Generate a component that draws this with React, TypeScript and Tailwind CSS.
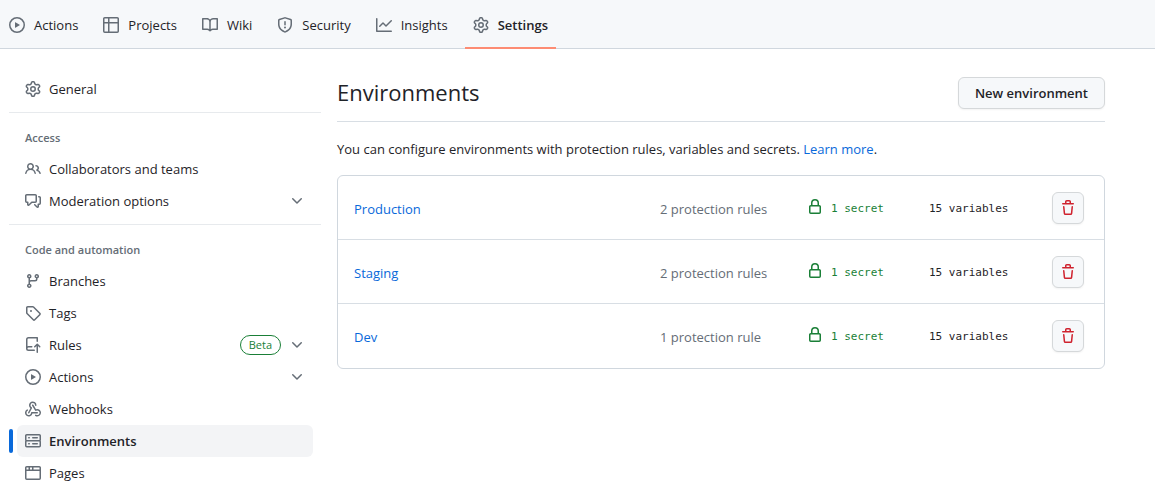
import type { ReactNode } from "react";

const icons = {
  play: "M8 0a8 8 0 1 1 0 16A8 8 0 0 1 8 0ZM1.5 8a6.5 6.5 0 1 0 13 0 6.5 6.5 0 0 0-13 0Zm4.879-2.773 4.264 2.559a.25.25 0 0 1 0 .428l-4.264 2.559A.25.25 0 0 1 6 10.559V5.442a.25.25 0 0 1 .379-.215Z",
  table:
    "M0 1.75C0 .784.784 0 1.75 0h12.5C15.216 0 16 .784 16 1.75v12.5A1.75 1.75 0 0 1 14.25 16H1.75A1.75 1.75 0 0 1 0 14.25ZM6.5 6.5v8h7.75a.25.25 0 0 0 .25-.25V6.5Zm8-1.5V1.75a.25.25 0 0 0-.25-.25H6.5V5Zm-13 1.5v7.75c0 .138.112.25.25.25H5v-8ZM5 5V1.5H1.75a.25.25 0 0 0-.25.25V5Z",
  book: "M0 1.75A.75.75 0 0 1 .75 1h4.253c1.227 0 2.317.59 3 1.501A3.743 3.743 0 0 1 11.006 1h4.245a.75.75 0 0 1 .75.75v10.5a.75.75 0 0 1-.75.75h-4.507a2.25 2.25 0 0 0-1.591.659l-.622.621a.75.75 0 0 1-1.06 0l-.622-.621A2.25 2.25 0 0 0 5.258 13H.75a.75.75 0 0 1-.75-.75Zm7.251 10.324.004-5.073-.002-2.253A2.25 2.25 0 0 0 5.003 2.5H1.5v9h3.757a3.75 3.75 0 0 1 1.994.574ZM8.755 4.75l-.004 7.322a3.752 3.752 0 0 1 1.992-.572H14.5v-9h-3.495a2.25 2.25 0 0 0-2.25 2.25Z",
  shield:
    "M7.467.133a1.748 1.748 0 0 1 1.066 0l5.25 1.68A1.75 1.75 0 0 1 15 3.48V7c0 1.566-.32 3.182-1.303 4.682-.983 1.498-2.585 2.813-5.032 3.855a1.697 1.697 0 0 1-1.33 0c-2.447-1.042-4.049-2.357-5.032-3.855C1.32 10.182 1 8.566 1 7V3.48a1.75 1.75 0 0 1 1.217-1.667Zm.61 1.429a.25.25 0 0 0-.153 0l-5.25 1.68a.25.25 0 0 0-.174.238V7c0 1.358.275 2.666 1.057 3.86.784 1.194 2.121 2.34 4.366 3.297a.196.196 0 0 0 .154 0c2.245-.956 3.582-2.104 4.366-3.298C13.225 9.666 13.5 8.36 13.5 7V3.48a.251.251 0 0 0-.174-.237l-5.25-1.68ZM8.75 4.75v3a.75.75 0 0 1-1.5 0v-3a.75.75 0 0 1 1.5 0ZM9 10.5a1 1 0 1 1-2 0 1 1 0 0 1 2 0Z",
  graph:
    "M1.5 1.75V13.5h13.75a.75.75 0 0 1 0 1.5H.75a.75.75 0 0 1-.75-.75V1.75a.75.75 0 0 1 1.5 0Zm14.28 2.53-5.25 5.25a.75.75 0 0 1-1.06 0L7 7.06 4.28 9.78a.751.751 0 0 1-1.042-.018.751.751 0 0 1-.018-1.042l3.25-3.25a.75.75 0 0 1 1.06 0L10 7.94l4.72-4.72a.751.751 0 0 1 1.042.018.751.751 0 0 1 .018 1.042Z",
  gear: "M8 0a8.2 8.2 0 0 1 .701.031C9.444.095 9.99.645 10.16 1.29l.288 1.107c.018.066.079.158.212.224.231.114.454.243.668.386.123.082.233.09.299.071l1.103-.303c.644-.176 1.392.021 1.82.63.27.385.506.792.704 1.218.315.675.111 1.422-.364 1.891l-.814.806c-.049.048-.098.147-.088.294.016.257.016.515 0 .772-.01.147.038.246.088.294l.814.806c.475.469.679 1.216.364 1.891a7.977 7.977 0 0 1-.704 1.217c-.428.61-1.176.807-1.82.63l-1.102-.302c-.067-.019-.177-.011-.3.071a5.909 5.909 0 0 1-.668.386c-.133.066-.194.158-.211.224l-.29 1.106c-.168.646-.715 1.196-1.458 1.26a8.006 8.006 0 0 1-1.402 0c-.743-.064-1.289-.614-1.458-1.26l-.289-1.106c-.018-.066-.079-.158-.212-.224a5.738 5.738 0 0 1-.668-.386c-.123-.082-.233-.09-.299-.071l-1.103.303c-.644.176-1.392-.021-1.82-.63a8.12 8.12 0 0 1-.704-1.218c-.315-.675-.111-1.422.363-1.891l.815-.806c.05-.048.098-.147.088-.294a6.214 6.214 0 0 1 0-.772c.01-.147-.038-.246-.088-.294l-.815-.806C.635 6.045.431 5.298.746 4.623a7.92 7.92 0 0 1 .704-1.217c.428-.61 1.176-.807 1.82-.63l1.102.302c.067.019.177.011.3-.071.214-.143.437-.272.668-.386.133-.066.194-.158.211-.224l.29-1.106C6.009.645 6.556.095 7.299.03 7.53.01 7.764 0 8 0Zm-.571 1.525c-.036.003-.108.036-.137.146l-.289 1.105c-.147.561-.549.967-.998 1.189-.173.086-.34.183-.5.29-.417.278-.97.423-1.529.27l-1.103-.303c-.109-.03-.175.016-.195.045-.22.312-.412.644-.573.99-.014.031-.021.11.059.19l.815.806c.411.406.562.957.53 1.456a4.709 4.709 0 0 0 0 .582c.032.499-.119 1.05-.53 1.456l-.815.806c-.081.08-.073.159-.059.19.162.346.353.677.573.989.02.03.085.076.195.046l1.102-.303c.56-.153 1.113-.008 1.53.27.161.107.328.204.501.29.447.222.85.629.997 1.189l.289 1.105c.029.109.101.143.137.146a6.6 6.6 0 0 0 1.142 0c.036-.003.108-.036.137-.146l.289-1.105c.147-.561.549-.967.998-1.189.173-.086.34-.183.5-.29.417-.278.97-.423 1.529-.27l1.103.303c.109.029.175-.016.195-.045.22-.313.411-.644.573-.99.014-.031.021-.11-.059-.19l-.815-.806c-.411-.406-.562-.957-.53-1.456a4.709 4.709 0 0 0 0-.582c-.032-.499.119-1.05.53-1.456l.815-.806c.081-.08.073-.159.059-.19a6.464 6.464 0 0 0-.573-.989c-.02-.03-.085-.076-.195-.046l-1.102.303c-.56.153-1.113.008-1.53-.27a4.44 4.44 0 0 0-.501-.29c-.447-.222-.85-.629-.997-1.189l-.289-1.105c-.029-.11-.101-.143-.137-.146a6.6 6.6 0 0 0-1.142 0ZM11 8a3 3 0 1 1-6 0 3 3 0 0 1 6 0ZM9.5 8a1.5 1.5 0 1 0-3.001.001A1.5 1.5 0 0 0 9.5 8Z",
  people:
    "M2 5.5a3.5 3.5 0 1 1 5.898 2.549 5.508 5.508 0 0 1 3.034 4.084.75.75 0 1 1-1.482.235 4 4 0 0 0-7.9 0 .75.75 0 0 1-1.482-.236A5.507 5.507 0 0 1 3.102 8.05 3.493 3.493 0 0 1 2 5.5ZM11 4a3.001 3.001 0 0 1 2.22 5.018 5.01 5.01 0 0 1 2.56 3.012.749.749 0 0 1-.885.954.752.752 0 0 1-.549-.514 3.507 3.507 0 0 0-2.522-2.372.75.75 0 0 1-.574-.73v-.352a.75.75 0 0 1 .416-.672A1.5 1.5 0 0 0 11 5.5.75.75 0 0 1 11 4Zm-5.5-.5a2 2 0 1 0-.001 3.999A2 2 0 0 0 5.5 3.5Z",
  discussion:
    "M1.75 1h8.5c.966 0 1.75.784 1.75 1.75v5.5A1.75 1.75 0 0 1 10.25 10H7.061l-2.574 2.573A1.458 1.458 0 0 1 2 11.543V10h-.25A1.75 1.75 0 0 1 0 8.25v-5.5C0 1.784.784 1 1.75 1ZM1.5 2.75v5.5c0 .138.112.25.25.25h1a.75.75 0 0 1 .75.75v2.19l2.72-2.72a.749.749 0 0 1 .53-.22h3.5a.25.25 0 0 0 .25-.25v-5.5a.25.25 0 0 0-.25-.25h-8.5a.25.25 0 0 0-.25.25Zm13 2a.25.25 0 0 0-.25-.25h-.5a.75.75 0 0 1 0-1.5h.5c.966 0 1.75.784 1.75 1.75v5.5A1.75 1.75 0 0 1 14.25 12H14v1.543a1.458 1.458 0 0 1-2.487 1.03L9.22 12.28a.749.749 0 0 1 .326-1.275.749.749 0 0 1 .734.215l2.22 2.22v-2.19a.75.75 0 0 1 .75-.75h1a.25.25 0 0 0 .25-.25Z",
  chevron:
    "M12.78 5.22a.749.749 0 0 1 0 1.06l-4.25 4.25a.749.749 0 0 1-1.06 0L3.22 6.28a.749.749 0 1 1 1.06-1.06L8 8.939l3.72-3.719a.749.749 0 0 1 1.06 0Z",
  branch:
    "M9.5 3.25a2.25 2.25 0 1 1 3 2.122V6A2.5 2.5 0 0 1 10 8.5H6a1 1 0 0 0-1 1v1.128a2.251 2.251 0 1 1-1.5 0V5.372a2.25 2.25 0 1 1 1.5 0v1.836A2.493 2.493 0 0 1 6 7h4a1 1 0 0 0 1-1v-.628A2.25 2.25 0 0 1 9.5 3.25Zm-6 0a.75.75 0 1 0 1.5 0 .75.75 0 0 0-1.5 0Zm8.25-.75a.75.75 0 1 0 0 1.5.75.75 0 0 0 0-1.5ZM4.25 12a.75.75 0 1 0 0 1.5.75.75 0 0 0 0-1.5Z",
  tag: "M1 7.775V2.75C1 1.784 1.784 1 2.75 1h5.025c.464 0 .91.184 1.238.513l6.25 6.25a1.75 1.75 0 0 1 0 2.474l-5.026 5.026a1.75 1.75 0 0 1-2.474 0l-6.25-6.25A1.752 1.752 0 0 1 1 7.775Zm1.5 0c0 .066.026.13.073.177l6.25 6.25a.25.25 0 0 0 .354 0l5.025-5.025a.25.25 0 0 0 0-.354l-6.25-6.25a.25.25 0 0 0-.177-.073H2.75a.25.25 0 0 0-.25.25ZM6 5a1 1 0 1 1 0 2 1 1 0 0 1 0-2Z",
  push: "M1 2.5A2.5 2.5 0 0 1 3.5 0h8.75a.75.75 0 0 1 .75.75v3.5a.75.75 0 0 1-1.5 0V1.5h-8a1 1 0 0 0-1 1v6.708A2.493 2.493 0 0 1 3.5 9h3.25a.75.75 0 0 1 0 1.5H3.5a1 1 0 0 0 0 2h5.75a.75.75 0 0 1 0 1.5H3.5A2.5 2.5 0 0 1 1 11.5Zm13.23 7.79-1.224-1.224v6.184a.75.75 0 0 1-1.5 0V9.066L10.28 10.29a.75.75 0 0 1-1.06-1.061l2.505-2.504a.75.75 0 0 1 1.06 0L15.29 9.23a.751.751 0 0 1-.018 1.042.751.751 0 0 1-1.042.018Z",
  webhook:
    "M5.5 4.25a2.25 2.25 0 0 1 4.5 0 .75.75 0 0 0 1.5 0 3.75 3.75 0 1 0-6.14 2.889l-2.272 4.258a.75.75 0 0 0 1.324.706L7 7.25a.75.75 0 0 0-.309-1.015A2.25 2.25 0 0 1 5.5 4.25ZM7.364 3.607a.75.75 0 0 1 1.03.257l2.608 4.349a3.75 3.75 0 1 1-.628 6.785.75.75 0 0 1 .752-1.299 2.25 2.25 0 1 0-.033-3.88.75.75 0 0 1-1.03-.256L7.107 4.636a.75.75 0 0 1 .257-1.03ZM2.9 8.776A.75.75 0 0 1 2.625 9.8 2.25 2.25 0 1 0 6 11.75a.75.75 0 0 1 .75-.751h5.5a.75.75 0 0 1 0 1.5H7.425a3.751 3.751 0 1 1-5.55-3.998.75.75 0 0 1 1.024.274Z",
  server:
    "M1.75 1h12.5c.966 0 1.75.784 1.75 1.75v4c0 .372-.116.717-.314 1 .198.283.314.628.314 1v4a1.75 1.75 0 0 1-1.75 1.75H1.75A1.75 1.75 0 0 1 0 12.75v-4c0-.358.109-.707.314-1a1.739 1.739 0 0 1-.314-1v-4C0 1.784.784 1 1.75 1ZM1.5 2.75v4c0 .138.112.25.25.25h12.5a.25.25 0 0 0 .25-.25v-4a.25.25 0 0 0-.25-.25H1.75a.25.25 0 0 0-.25.25Zm.25 5.75a.25.25 0 0 0-.25.25v4c0 .138.112.25.25.25h12.5a.25.25 0 0 0 .25-.25v-4a.25.25 0 0 0-.25-.25ZM7 4.75A.75.75 0 0 1 7.75 4h4.5a.75.75 0 0 1 0 1.5h-4.5A.75.75 0 0 1 7 4.75ZM7.75 10h4.5a.75.75 0 0 1 0 1.5h-4.5a.75.75 0 0 1 0-1.5ZM3 4.75A.75.75 0 0 1 3.75 4h.5a.75.75 0 0 1 0 1.5h-.5A.75.75 0 0 1 3 4.75ZM3.75 10h.5a.75.75 0 0 1 0 1.5h-.5a.75.75 0 0 1 0-1.5Z",
  browser:
    "M0 2.75C0 1.784.784 1 1.75 1h12.5c.966 0 1.75.784 1.75 1.75v10.5A1.75 1.75 0 0 1 14.25 15H1.75A1.75 1.75 0 0 1 0 13.25ZM14.5 6h-13v7.25c0 .138.112.25.25.25h12.5a.25.25 0 0 0 .25-.25Zm-6-3.5v2h6V2.75a.25.25 0 0 0-.25-.25ZM5 2.5v2h2v-2Zm-3.25 0a.25.25 0 0 0-.25.25V4.5h2v-2Z",
  lock: "M4 4a4 4 0 0 1 8 0v2h.25c.966 0 1.75.784 1.75 1.75v5.5A1.75 1.75 0 0 1 12.25 15h-8.5A1.75 1.75 0 0 1 2 13.25v-5.5C2 6.784 2.784 6 3.75 6H4Zm8.25 3.5h-8.5a.25.25 0 0 0-.25.25v5.5c0 .138.112.25.25.25h8.5a.25.25 0 0 0 .25-.25v-5.5a.25.25 0 0 0-.25-.25ZM10.5 6V4a2.5 2.5 0 1 0-5 0v2Z",
  trash:
    "M11 1.75V3h2.25a.75.75 0 0 1 0 1.5H2.75a.75.75 0 0 1 0-1.5H5V1.75C5 .784 5.784 0 6.75 0h2.5C10.216 0 11 .784 11 1.75ZM4.496 6.675l.66 6.6a.25.25 0 0 0 .249.225h5.19a.25.25 0 0 0 .249-.225l.66-6.6a.75.75 0 0 1 1.492.149l-.66 6.6A1.748 1.748 0 0 1 10.595 15h-5.19a1.75 1.75 0 0 1-1.741-1.575l-.66-6.6a.75.75 0 1 1 1.492-.15ZM6.5 1.75V3h3V1.75a.25.25 0 0 0-.25-.25h-2.5a.25.25 0 0 0-.25.25Z",
};

type IconName = keyof typeof icons;

function Icon({ name, className = "" }: { name: IconName; className?: string }) {
  return (
    <svg viewBox="0 0 16 16" fill="currentColor" aria-hidden="true" className={`size-4 shrink-0 ${className}`}>
      <path d={icons[name]} />
    </svg>
  );
}

const tabs: { label: string; icon: IconName; current?: boolean }[] = [
  { label: "Actions", icon: "play" },
  { label: "Projects", icon: "table" },
  { label: "Wiki", icon: "book" },
  { label: "Security", icon: "shield" },
  { label: "Insights", icon: "graph" },
  { label: "Settings", icon: "gear", current: true },
];

function RepoNav() {
  return (
    <nav className="flex h-[49px] gap-[9px] border-b border-[#d0d7de] bg-[#f6f8fa] px-px">
      {tabs.map((tab) => (
        <a
          key={tab.label}
          href="#"
          aria-current={tab.current ? "page" : undefined}
          className={`-mb-px flex items-center gap-[9px] border-b-2 px-2 pt-[3px] ${
            tab.current ? "border-[#fd8c73] font-semibold" : "border-transparent"
          }`}
        >
          <Icon name={tab.icon} className="text-[#656d76]" />
          {tab.label}
        </a>
      ))}
    </nav>
  );
}

function SideItem({
  icon,
  label,
  current,
  expandable,
  badge,
}: {
  icon: IconName;
  label: string;
  current?: boolean;
  expandable?: boolean;
  badge?: string;
}) {
  const content = (
    <>
      <Icon name={icon} className="text-[#656d76]" />
      <span className="flex-1 text-left">{label}</span>
      {badge && (
        <span className="rounded-full border border-[#1a7f37] px-2 text-[11px] leading-[18px] font-medium text-[#1a7f37]">
          {badge}
        </span>
      )}
      {expandable && <Icon name="chevron" className="text-[#656d76]" />}
    </>
  );
  const row = "flex h-8 w-full items-center gap-2 rounded-md px-2";
  return (
    <li className="relative">
      {current && <span className="absolute top-1 -left-2 h-6 w-1 rounded-md bg-[#0969da]" />}
      {expandable ? (
        <button type="button" aria-expanded="false" className={row}>
          {content}
        </button>
      ) : (
        <a
          href="#"
          aria-current={current ? "page" : undefined}
          className={`${row} ${current ? "bg-[#f3f4f6] font-semibold" : ""}`}
        >
          {content}
        </a>
      )}
    </li>
  );
}

function SideSection({ title, children }: { title: string; children: ReactNode }) {
  return (
    <section>
      <hr className="-mx-2 mt-[7px] mb-2 border-[#e7eaed]" />
      <h2 className="px-2 pt-[7px] pb-[5px] text-[11px] leading-5 font-semibold text-[#656d76]">{title}</h2>
      <ul>{children}</ul>
    </section>
  );
}

function Sidebar() {
  return (
    <nav aria-label="Settings" className="w-[296px] shrink-0">
      <ul>
        <SideItem icon="gear" label="General" />
      </ul>
      <SideSection title="Access">
        <SideItem icon="people" label="Collaborators and teams" />
        <SideItem icon="discussion" label="Moderation options" expandable />
      </SideSection>
      <SideSection title="Code and automation">
        <SideItem icon="branch" label="Branches" />
        <SideItem icon="tag" label="Tags" />
        <SideItem icon="push" label="Rules" badge="Beta" expandable />
        <SideItem icon="play" label="Actions" expandable />
        <SideItem icon="webhook" label="Webhooks" />
        <SideItem icon="server" label="Environments" current />
        <SideItem icon="browser" label="Pages" />
      </SideSection>
    </nav>
  );
}

const environments = [
  { name: "Production", rules: "2 protection rules" },
  { name: "Staging", rules: "2 protection rules" },
  { name: "Dev", rules: "1 protection rule" },
];

export default function App() {
  return (
    <div className="bg-white font-['Open_Sans','Noto_Sans',sans-serif] text-[13px] leading-5 text-[#1f2328]">
      <RepoNav />
      <div className="flex gap-6 pt-6 pr-[50px] pl-[17px]">
        <Sidebar />
        <main className="min-w-0 flex-1 pt-1">
          <div className="flex items-start justify-between border-b border-[#d8dee4] pb-3">
            <h1 className="text-[22px] leading-[30px]">Environments</h1>
            <button
              type="button"
              className="h-8 rounded-md border border-[#d5d8da] bg-[#f6f8fa] px-4 font-semibold shadow-xs"
            >
              New environment
            </button>
          </div>
          <p className="mt-[17px]">
            You can configure environments with protection rules, variables and secrets.{" "}
            <a href="#" className="text-[#0969da]">
              Learn more
            </a>
            .
          </p>
          <div className="mt-4 rounded-md border border-[#d0d7de]">
            <table className="w-full table-fixed border-separate border-spacing-0">
              <tbody className="align-top">
                {environments.map((env) => (
                  <tr key={env.name} className="h-16 *:border-[#d8dee4] not-last:*:border-b">
                    <td className="pt-[23px] pl-4">
                      <a href="#" className="text-[#0969da]">
                        {env.name}
                      </a>
                    </td>
                    <td className="w-[147px] pt-[23px] text-[#656d76]">{env.rules}</td>
                    <td className="w-[122px] pt-[23px] text-[#1a7f37]">
                      <span className="flex items-start gap-2 font-['DejaVu_Sans_Mono',monospace] text-[11px]">
                        <Icon name="lock" />
                        1 secret
                      </span>
                    </td>
                    <td className="w-[123px] pt-[23px] font-['DejaVu_Sans_Mono',monospace] text-[11px]">
                      15 variables
                    </td>
                    <td className="w-[52px] pt-4">
                      <button
                        type="button"
                        aria-label={`Delete ${env.name}`}
                        className="flex size-8 items-center justify-center rounded-md border border-[#d5d8da] bg-[#f6f8fa] text-[#cf222e] shadow-xs"
                      >
                        <Icon name="trash" />
                      </button>
                    </td>
                  </tr>
                ))}
              </tbody>
            </table>
          </div>
        </main>
      </div>
    </div>
  );
}
